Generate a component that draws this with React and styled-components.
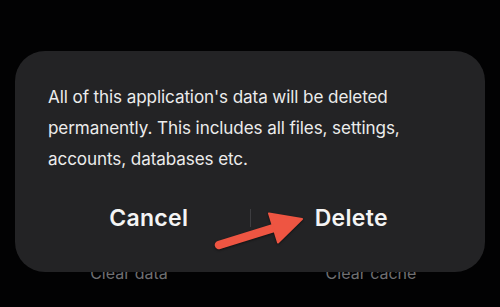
import React from "react";
import styled, { createGlobalStyle } from "styled-components";

const GlobalStyle = createGlobalStyle`
  html, body {
    margin: 0;
    padding: 0;
    background: #020203;
  }
  body {
    font-family: Inter, "Noto Sans", sans-serif;
    -webkit-font-smoothing: antialiased;
  }
`;

const App = () => {
  return (
    <>
      <GlobalStyle />
      <Screen>
        <Dialog>
          <Message>
            All of this application's data will be deleted
            <br />
            permanently. This includes all files, settings,
            <br />
            accounts, databases etc.
          </Message>
          <Actions>
            <ActionButton>Cancel</ActionButton>
            <Divider />
            <ActionButton>Delete</ActionButton>
          </Actions>
          <Arrow viewBox="0 0 470 221" aria-hidden="true">
            <line
              x1="204"
              y1="194"
              x2="262"
              y2="176"
              stroke="#ee5542"
              strokeWidth="8.5"
              strokeLinecap="round"
            />
            <polygon
              points="287,168 263,191.5 254,162.5"
              fill="#ee5542"
              stroke="#ee5542"
              strokeWidth="2"
              strokeLinejoin="round"
            />
          </Arrow>
        </Dialog>
        <BehindRow>
          <BehindLabel>Clear data</BehindLabel>
          <BehindLabel>Clear cache</BehindLabel>
        </BehindRow>
      </Screen>
    </>
  );
};

export default App;

const Screen = styled.div`
  width: 500px;
  height: 307px;
  padding: 51px 15px 0;
  box-sizing: border-box;
  overflow: hidden;
`;

const Dialog = styled.div`
  position: relative;
  z-index: 1;
  height: 221px;
  box-sizing: border-box;
  padding: 30px 33px 0;
  background: #232325;
  border-radius: 30px;
  display: flex;
  flex-direction: column;
`;

const Message = styled.p`
  margin: 0;
  color: #ececec;
  font-size: 17.1px;
  line-height: 31px;
  letter-spacing: -0.1px;
`;

const Actions = styled.div`
  margin-top: 30px;
  display: grid;
  grid-template-columns: 1fr 1px 1fr;
  align-items: center;
`;

const ActionButton = styled.button`
  background: none;
  border: none;
  padding: 0;
  font-family: Inter, "Noto Sans", sans-serif;
  font-size: 23px;
  font-weight: 600;
  line-height: 28px;
  letter-spacing: 0.3px;
  color: #f4f4f4;
  text-align: center;
`;

const Divider = styled.div`
  width: 1px;
  height: 18px;
  background: #3d3d40;
`;

const Arrow = styled.svg`
  position: absolute;
  left: 0;
  top: 0;
  width: 470px;
  height: 221px;
  pointer-events: none;
  filter: drop-shadow(0 1px 1px rgba(0, 0, 0, 0.5));
`;

const BehindRow = styled.div`
  margin: -10px -7px 0;
  display: grid;
  grid-template-columns: 1fr 1fr;
`;

const BehindLabel = styled.span`
  text-align: center;
  font-size: 16px;
  line-height: 22px;
  color: #6f6f72;
`;
